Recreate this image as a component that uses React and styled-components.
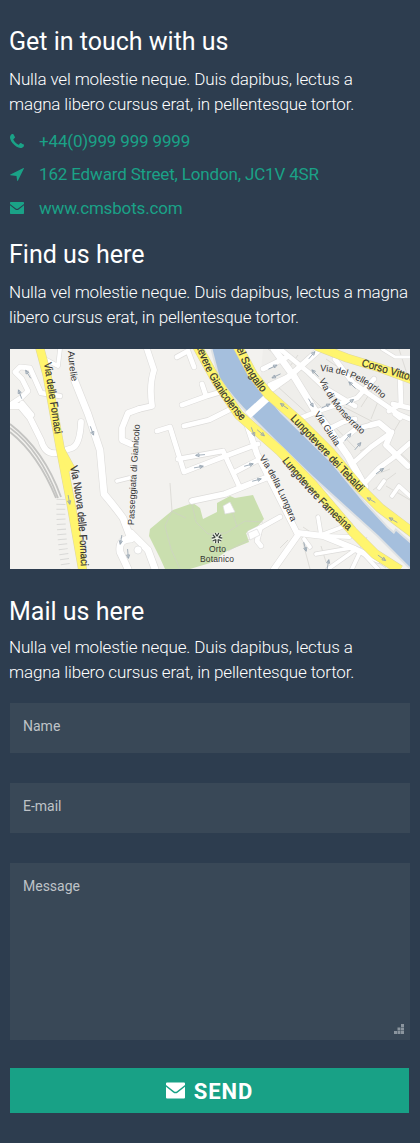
import React from 'react';
import styled, { createGlobalStyle } from 'styled-components';

const GlobalStyle = createGlobalStyle`
  * { box-sizing: border-box; }
  body { margin: 0; background: #2d3d4f; font-family: Roboto, sans-serif; }
`;

const Page = styled.main`
  width: 420px;
  height: 1143px;
  padding: 24px 10px 0 9px;
  background: #2d3d4f;
  color: #fff;
`;

const Section = styled.section`
  height: ${(p) => p.$height}px;
`;

const Heading = styled.h2`
  margin: 0 0 ${(p) => p.$gap || 7}px;
  font-size: 25px;
  line-height: 36px;
  font-weight: 400;
`;

const Copy = styled.p`
  margin: 0;
  font-size: 17px;
  line-height: 25px;
  font-weight: 300;
  letter-spacing: -0.15px;
  white-space: pre;
`;

const ContactList = styled.ul`
  margin: 7px 0 0;
  padding: 0;
  list-style: none;
  color: #1aa287;
`;

const Contact = styled.li`
  display: flex;
  align-items: center;
  height: 33.5px;
  font-size: 17px;
  letter-spacing: -0.16px;
  white-space: nowrap;
  svg { width: 14px; height: 14px; margin: 0 15px 0 1px; flex: none; }
`;

const Icon = styled.svg`
  display: block;
  fill: currentColor;
`;

const MapFrame = styled.div`
  width: 400px;
  height: 220px;
  margin: 19px 0 0 1px;
  overflow: hidden;
  svg { display: block; }
`;

const Form = styled.form`
  display: flex;
  flex-direction: column;
  margin: 18px 0 0 1px;
`;

const Input = styled.input`
  width: 400px;
  height: 50px;
  margin: 0 0 30px;
  padding: 0 13px 4px;
  border: 0;
  border-radius: 0;
  outline: 0;
  background: #394857;
  color: #c5cacf;
  font: 400 14px Roboto, sans-serif;
  &::placeholder { color: #bfc3c7; opacity: 1; }
`;

const MessageBox = styled.div`
  position: relative;
  width: 400px;
  height: 177px;
  background: #394857;
`;

const TextArea = styled.textarea`
  display: block;
  width: 100%;
  height: 100%;
  padding: 15px 13px;
  border: 0;
  outline: 0;
  resize: none;
  background: transparent;
  color: #c5cacf;
  font: 400 14px/17px Roboto, sans-serif;
  &::placeholder { color: #bfc3c7; opacity: 1; }
`;

const Grip = styled.svg`
  position: absolute;
  right: 6px;
  bottom: 6px;
`;

const SendButton = styled.button`
  display: flex;
  align-items: center;
  justify-content: center;
  gap: 9px;
  width: 399px;
  height: 45px;
  margin: 28px 0 0;
  padding: 2px 0 0;
  border: 0;
  background: #18a186;
  color: #fff;
  font: 700 22px Roboto, sans-serif;
  letter-spacing: 1px;
  svg { width: 19px; height: 19px; margin-top: -3px; }
`;

const streets = [
  ['M0 56 L12 48 L18 42 L12 30 L5 23 L10 18 L20 19 L31 44 L50 47', 5],
  ['M0 57 L10 57 L20 69 L31 91 Q35 106 47 104 L62 99 Q70 96 71 73', 6],
  ['M12 54 L22 66', 5],
  ['M31 8 L48 17 L50 0', 4],
  ['M64 30 L78 65 L90 101 L94 145 Q105 158 113 169 L121 190 Q108 190 110 203 L118 220', 7],
  ['M121 184 L138 201 L145 220', 7],
  ['M129 60 L118 64 L112 79 L112 91 L121 95', 6],
  ['M129 60 L142 57 Q139 36 144 21 L137 0', 6],
  ['M107 132 L119 129', 4],
  ['M167 8 L178 2 L184 18', 5],
  ['M192 35 L196 47 M172 56 L197 47 L214 42', 5],
  ['M174 77 L199 71 L219 61', 5],
  ['M147 82 L160 78 L174 123 L205 111 L248 95', 5],
  ['M168 110 L213 102 L230 139 M223 124 L248 111', 5],
  ['M182 152 L215 145 L245 133 L261 127', 6],
  ['M235 69 L247 105 L288 186 L264 220', 6],
  ['M288 184 L313 187 L345 200 L368 211', 6],
  ['M308 168 L311 186 L340 175 M294 190 L300 198 M306 205 L341 199', 4],
  ['M317 187 L340 188 M345 201 L318 220 M350 203 L342 220', 4],
  ['M352 203 L368 220', 4],
  ['M255 45 L276 30 L291 17 L310 0', 6],
  ['M264 0 L285 29 L304 60 L319 80 L338 107 L355 138', 7],
  ['M270 0 L298 23 L315 39 L345 57', 5],
  ['M253 20 L277 8 M260 36 L284 25', 5],
  ['M291 69 L311 61 L347 49 L364 30', 5],
  ['M325 10 L343 34 L388 65 L400 70', 5],
  ['M319 80 L333 73 L345 70 M328 94 L346 80 L361 76', 5],
  ['M361 76 L369 74 L381 84 L376 96 L398 117', 6],
  ['M342 115 L361 98 L382 83', 5],
  ['M350 139 L369 119 L384 108 L400 94', 5],
  ['M369 139 L374 132 M382 147 L389 137 L400 147', 4],
  ['M390 25 L391 55 L379 62 M383 55 L400 59 M385 65 L390 69', 5],
  ['M372 0 L385 8 L400 8', 3],
  ['M240 184 L252 178 L270 168 M250 180 L247 192 L251 197', 5],
];

const yellowRoads = [
  ['M29 -4 L37 26 L50 98 L61 155 L73 223', 8],
  ['M50 99 L62 121', 7],
  ['M186 -5 L207 33 L229 66 L270 102 L303 136 L343 183 L365 205 L390 221', 9],
  ['M227 -4 L243 26 L258 45 L290 73 L320 103 L350 139 L370 159 L403 184', 9],
  ['M306 -3 L337 9 L370 19 L403 31', 8],
];

const labels = [
  ['fornaci', 'M34 14 L45 86', 'Via delle Fornaci', 72, 11],
  ['aurelie', 'M58 -6 Q58 15 62 34', 'a Aurelie', 39, 9.5],
  ['nuova', 'M60 118 Q69 155 71 220', 'Via Nuova delle Fornaci', 100, 11],
  ['passeggiata', 'M124 176 Q125 145 130 74', 'Passeggiata di Gianicolo', 101, 9],
  ['gianicolense', 'M187 -1 Q200 38 232 73', 'tevere Gianicolense', 86, 11],
  ['sangallo', 'M225 -6 Q232 20 252 44', 'del Sangallo', 57, 11],
  ['tebaldi', 'M280 70 L350 144', 'Lungotevere dei Tebaldi', 101, 11],
  ['farnesina', 'M272 112 Q301 149 338 182', 'Lungotevere Farnesina', 96, 11],
  ['lungara', 'M249 109 Q264 130 281 173', 'Via della Lungara', 72, 9.2],
  ['giulia', 'M304 65 L326 98', 'Via Giulia', 39, 9.2],
  ['monserrato', 'M309 31 Q323 63 354 87', 'Via di Monserrato', 70, 9.2],
  ['pellegrino', 'M310 22 Q347 24 373 50', 'Via del Pellegrino', 70, 9.2],
  ['corso', 'M351 17 L402 32', 'Corso Vittor', 53, 11],
];

const arrows = [
  [18, 25, 238], [10, 45, 250], [82, 82, 70], [111, 191, 100], [118, 205, 85],
  [59, 151, 80], [190, 106, 175], [189, 118, -10], [239, 116, -15],
  [247, 131, -15], [243, 83, 70], [251, 84, 40], [302, 6, -50],
  [305, 24, 225], [301, 54, 60], [316, 57, -25], [340, 53, -35],
  [342, 36, 225], [338, 88, -50], [348, 97, -50], [370, 122, -35],
  [361, 151, 210], [383, 171, 210], [295, 198, 75], [318, 215, -80],
  [372, 209, 35], [263, 18, -25], [266, 27, 155], [274, 57, 215],
];

const riverPath = 'M202 -2 L210 29 Q223 48 242 67 L270 95 L303 127 L337 158 L368 186 L385 203 L402 220 V196 L386 182 L384 185 L377 179 L353 153 L320 113 L270 64 L258 49 L240 29 L225 -2Z';

const StreetMap = () => (
  <svg width="400" height="220" viewBox="0 0 400 220" aria-label="Street map">
    <rect width="400" height="220" fill="#f3f2ef" />
    <path d="M253 0 H400 V184 L350 137 L282 68 L250 33Z" fill="#efeeeb" />
    <path d="M140 180 L152 170 L163 161 L183 154 L190 159 L193 170 L207 163 L207 154 L220 147 L225 149 L243 146 L254 170 L247 178 L236 184 L239 193 L217 202 L200 214 L180 220 H155 L150 209 L139 187Z" fill="#cadfaf" />
    <g fill="none" stroke="#d0cfc9" strokeWidth=".6">
      <path d="M160 134 L162 162 L155 177 L161 200 L170 220 M182 155 L186 173 L198 185 L216 184 L235 172 L253 173 M220 155 L227 178 M218 202 L240 190 M161 162 L176 169" />
      <path d="M282 29 L312 59 M293 21 L330 50 M267 37 L300 67 M288 6 L278 20 M324 77 L345 99 M334 58 L367 75 M350 102 L366 94 M357 129 L380 120 M363 141 L386 124 M371 45 L361 70 M364 38 L351 58 M390 72 L377 94 M389 103 L400 113 M376 137 L400 151 M258 0 L273 11 M316 10 L344 29 M389 0 L397 25" />
      <path d="M278 191 L270 199 M293 194 L300 220 M318 188 L341 199 M311 197 L316 213 M350 199 L357 188 M360 208 L376 219 M293 178 L305 186" />
    </g>
    <path d="M0 75 Q34 101 51 148 M0 79 Q30 101 48 149 M0 83 Q28 105 46 149" fill="none" stroke="#c4c4c2" strokeWidth="1.8" />
    <path d="M51 150 Q50 183 56 220" fill="none" stroke="#d9d9d7" strokeWidth="9" strokeDasharray="1 4" />
    <g fill="none" strokeLinejoin="round" strokeLinecap="round">
      {streets.map(([d, w]) => <path key={d} d={d} stroke="#dddcda" strokeWidth={w + 1} />)}
      {streets.map(([d, w]) => <path key={d} d={d} stroke="#fff" strokeWidth={w - 0.2} />)}
    </g>
    <path d={riverPath} fill="#a5bfdd" stroke="#dfe2e4" strokeWidth="4" />
    <path d={riverPath} fill="#a5bfdd" />
    <path d="M238 66 L260 46" stroke="#fff" strokeWidth="8" />
    <g fill="none" strokeLinejoin="round">
      {yellowRoads.map(([d, w]) => <path key={d} d={d} stroke="#ddd6a2" strokeWidth={w + 1} />)}
      {yellowRoads.map(([d, w]) => <path key={d} d={d} stroke="#fff56e" strokeWidth={w} />)}
    </g>
    <g fill="#fff" stroke="#ddd" strokeWidth=".7">
      <path d="M238 184 L247 180 L250 186 L240 191Z M213 157 L220 153 L225 163 L215 165Z" />
      <circle cx="128" cy="201" r="4" />
    </g>
    <g fill="none" stroke="#95a3b0" strokeWidth=".8">
      {arrows.map(([x, y, a]) => (
        <path key={`${x}-${y}`} d="M-5 0 H4 M1 -1.6 L4.5 0 L1 1.6Z" transform={`translate(${x} ${y}) rotate(${a})`} />
      ))}
    </g>
    <g fontFamily="Liberation Sans, sans-serif" fill="#333">
      {labels.map(([id, d, label, length, size]) => (
        <React.Fragment key={id}>
          <path id={id} d={d} fill="none" />
          <text fontSize={size} stroke={size > 10 ? '#333' : 'none'} strokeWidth=".2">
            <textPath href={`#${id}`} textLength={length} lengthAdjust="spacingAndGlyphs">{label}</textPath>
          </text>
        </React.Fragment>
      ))}
      <text x="207.5" y="203" fontSize="8.5" textAnchor="middle" textLength="17">Orto</text>
      <text x="207" y="213" fontSize="8.5" textAnchor="middle" textLength="34">Botanico</text>
    </g>
    <g transform="translate(207 189)">
      <circle r="5.5" fill="#eef3e6" />
      {[0, 72, 144, 216, 288].map((a) => <path key={a} d="M0 -1.8 L-1.8 -5 M0 -1.8 L1.8 -5" stroke="#3c453f" strokeWidth="1.2" transform={`rotate(${a})`} />)}
    </g>
  </svg>
);

const Phone = () => (
  <Icon viewBox="192 128 1408 1408" aria-hidden="true">
    <path d="M1600 1240q0 27-10 70.5t-21 68.5q-21 50-122 106-94 51-186 51-27 0-53-3.5t-57.5-12.5-47-14.5-55.5-20.5-49-18q-98-35-175-83-127-79-264-216t-216-264q-48-77-83-175-3-9-18-49t-20.5-55.5-14.5-47-12.5-57.5-3.5-53q0-92 51-186 56-101 106-122 25-11 68.5-21t70.5-10q14 0 21 3 18 6 53 76 11 19 30 54t35 63.5 31 53.5q3 4 17.5 25t21.5 35.5 7 28.5q0 20-28.5 50t-62 55-62 53-28.5 46q0 9 5 22.5t8.5 20.5 14 24 11.5 19q76 137 174 235t235 174q2 1 19 11.5t24 14 20.5 8.5 22.5 5q18 0 46-28.5t53-62 55-62 50-28.5q14 0 28.5 7t35.5 21.5 25 17.5q25 15 53.5 31t63.5 35 54 30q70 35 76 53 3 7 3 21z" />
  </Icon>
);

const Direction = () => (
  <Icon viewBox="0 0 14 14" aria-hidden="true">
    <path d="M13.5 1 Q14.2 .8 13.9 1.5 L8 13.6 Q7.4 14.3 7.1 13.5 L6.5 8.9 L.5 8.3 Q-.4 7.9 .4 7.4Z" />
  </Icon>
);

const Mail = () => (
  <Icon viewBox="0 0 19 19" aria-hidden="true">
    <path d="M1 1.5 H18 Q19 1.5 19 2.5 V4 L11 10.3 Q9.5 11.3 8 10.3 L0 4 V2.5 Q0 1.5 1 1.5Z M0 5.8 L7.2 11.5 Q9.5 13.2 11.8 11.5 L19 5.8 V16.5 Q19 17.5 18 17.5 H1 Q0 17.5 0 16.5Z" />
  </Icon>
);

export default function App() {
  return (
    <Page>
      <GlobalStyle />
      <Section $height={213}>
        <Heading>Get in touch with us</Heading>
        <Copy>{'Nulla vel molestie neque. Duis dapibus, lectus a\nmagna libero cursus erat, in pellentesque tortor.'}</Copy>
        <ContactList>
          <Contact><Phone />+44(0)999 999 9999</Contact>
          <Contact><Direction />162 Edward Street, London, JC1V 4SR</Contact>
          <Contact><Mail />www.cmsbots.com</Contact>
        </ContactList>
      </Section>
      <Section $height={357}>
        <Heading>Find us here</Heading>
        <Copy>{'Nulla vel molestie neque. Duis dapibus, lectus a magna\nlibero cursus erat, in pellentesque tortor.'}</Copy>
        <MapFrame><StreetMap /></MapFrame>
      </Section>
      <Section $height={549}>
        <Heading $gap={5}>Mail us here</Heading>
        <Copy>{'Nulla vel molestie neque. Duis dapibus, lectus a\nmagna libero cursus erat, in pellentesque tortor.'}</Copy>
        <Form onSubmit={(e) => e.preventDefault()}>
          <Input placeholder="Name" aria-label="Name" />
          <Input placeholder="E-mail" aria-label="E-mail" />
          <MessageBox>
            <TextArea placeholder="Message" aria-label="Message" />
            <Grip width="10" height="10" fill="#8b959e" aria-hidden="true">
              <path d="M7 0h3v3H7z M3.5 3.5h3v3h-3z M7 3.5h3v3H7z M0 7h3v3H0z M3.5 7h3v3h-3z M7 7h3v3H7z" />
            </Grip>
          </MessageBox>
          <SendButton type="submit"><Mail />SEND</SendButton>
        </Form>
      </Section>
    </Page>
  );
}
